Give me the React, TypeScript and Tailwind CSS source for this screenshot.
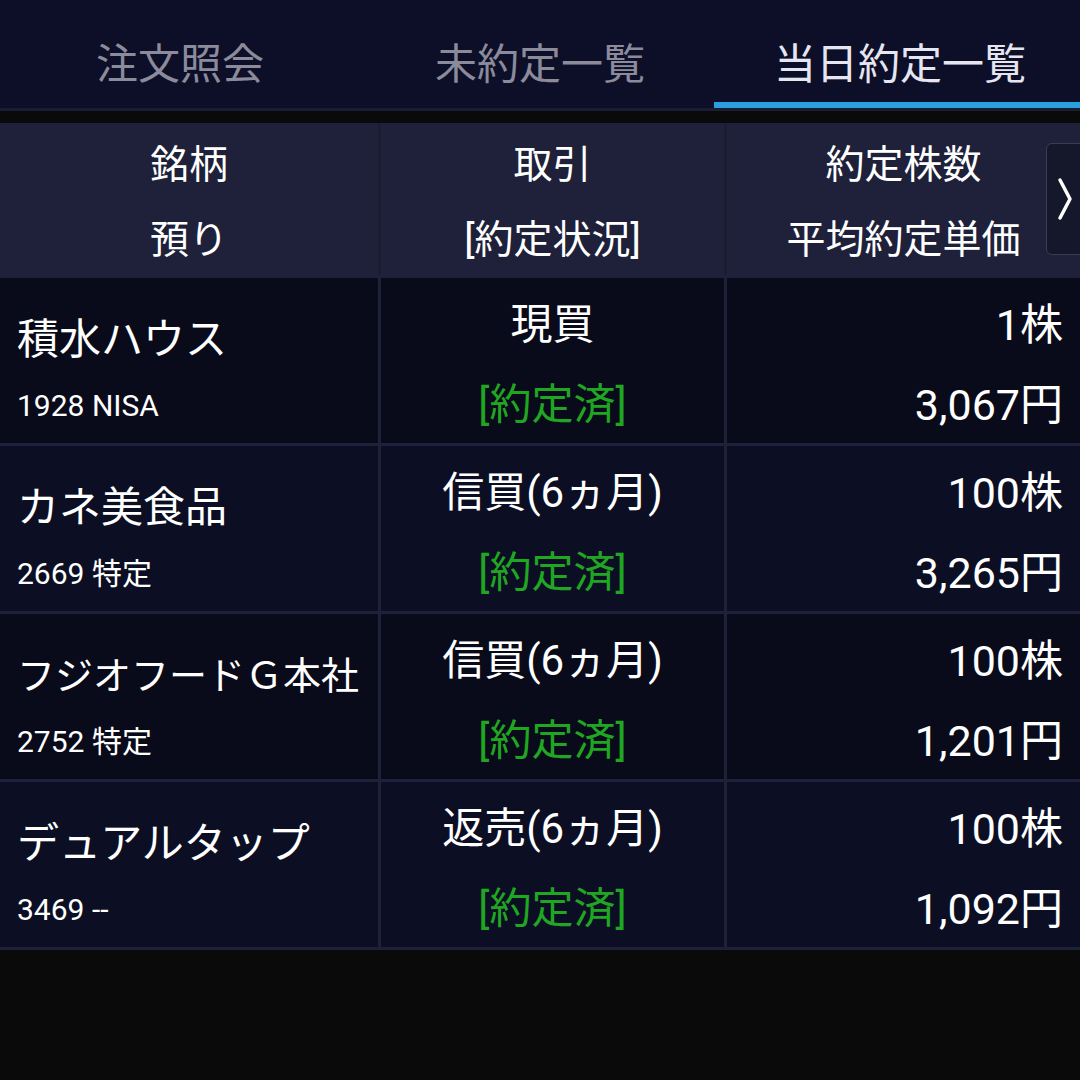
import React from "react";

const rows = [
  { name: "積水ハウス", code: "1928 NISA", trade: "現買", qty: "1株", price: "3,067円", small: false },
  { name: "カネ美食品", code: "2669 特定", trade: "信買(6ヵ月)", qty: "100株", price: "3,265円", small: false },
  { name: "フジオフードＧ本社", code: "2752 特定", trade: "信買(6ヵ月)", qty: "100株", price: "1,201円", small: true },
  { name: "デュアルタップ", code: "3469 --", trade: "返売(6ヵ月)", qty: "100株", price: "1,092円", small: false },
];

const tabs = ["注文照会", "未約定一覧", "当日約定一覧"];

export default function App() {
  return (
    <div
      className="w-[1080px] h-[1080px] bg-[#0a0a0a] text-white overflow-hidden"
      style={{ fontFamily: 'Roboto, "Noto Sans CJK JP", sans-serif' }}
    >
      {/* Tabs */}
      <div className="flex h-[108px] bg-[#0d0f29]">
        {tabs.map((t, i) => (
          <div key={t} className="relative flex-1 flex items-center justify-center">
            <span className={`text-[42px] leading-none pt-[22px] ${i === 2 ? "text-[#e6e6f0]" : "text-[#8b8b9b]"}`}>{t}</span>
            {i === 2 && <div className="absolute left-[-6px] right-0 bottom-0 h-[6px] bg-[#2a9fe0]" />}
          </div>
        ))}
      </div>
      <div className="h-[3px] bg-[#1a1c34]" />
      <div className="h-[12px] bg-[#0a0a0a]" />

      {/* Header */}
      <div className="relative flex h-[152px] bg-[#1e2139]">
        <div className="w-[378px] flex flex-col items-center pt-[18px] gap-[27px] text-[39px] leading-[48px]">
          <span>銘柄</span>
          <span>預り</span>
        </div>
        <div className="w-[3px] bg-[#1a1c31]" />
        <div className="w-[343px] flex flex-col items-center pt-[18px] gap-[27px] text-[39px] leading-[48px]">
          <span>取引</span>
          <span>[約定状況]</span>
        </div>
        <div className="w-[3px] bg-[#1a1c31]" />
        <div className="flex-1 flex flex-col items-center pt-[18px] gap-[27px] text-[39px] leading-[48px]">
          <span>約定株数</span>
          <span>平均約定単価</span>
        </div>
        <div className="absolute left-[1046px] top-[20px] w-[50px] h-[112px] rounded-[6px] border border-[#3a3c52] bg-[#15172a] flex items-center pl-[10px]">
          <svg width="16" height="44" viewBox="0 0 16 44" fill="none">
            <path d="M3 3 L13 22 L3 41" stroke="#ffffff" strokeWidth="3.5" strokeLinecap="round" strokeLinejoin="round" />
          </svg>
        </div>
      </div>

      {/* Rows */}
      <div className="bg-[#1e2139] flex flex-col gap-[3px] py-[3px]">
        {rows.map((r, i) => (
          <div key={r.name} className={`flex h-[165px] ${i % 2 === 0 ? "bg-[#090b1a]" : "bg-[#0c0f24]"}`}>
            <div className="w-[378px] flex flex-col pl-[17px] pt-[38px]">
              <span className={`${r.small ? "text-[38px]" : "text-[42px]"} leading-[48px] whitespace-nowrap`}>{r.name}</span>
              <span className="mt-[26px] text-[30px] leading-[32px]">{r.code}</span>
            </div>
            <div className="w-[3px] bg-[#1e2139]" />
            <div className="w-[343px] flex flex-col items-center pt-[23px]">
              <span className="text-[42px] leading-[48px]">{r.trade}</span>
              <span className="mt-[32px] text-[42px] leading-[48px] text-[#20a622]">[約定済]</span>
            </div>
            <div className="w-[3px] bg-[#1e2139]" />
            <div className="flex-1 flex flex-col items-end pr-[17px] pt-[23px]">
              <span className="text-[43px] leading-[48px]">{r.qty}</span>
              <span className="mt-[32px] text-[43px] leading-[48px]">{r.price}</span>
            </div>
          </div>
        ))}
      </div>
    </div>
  );
}
